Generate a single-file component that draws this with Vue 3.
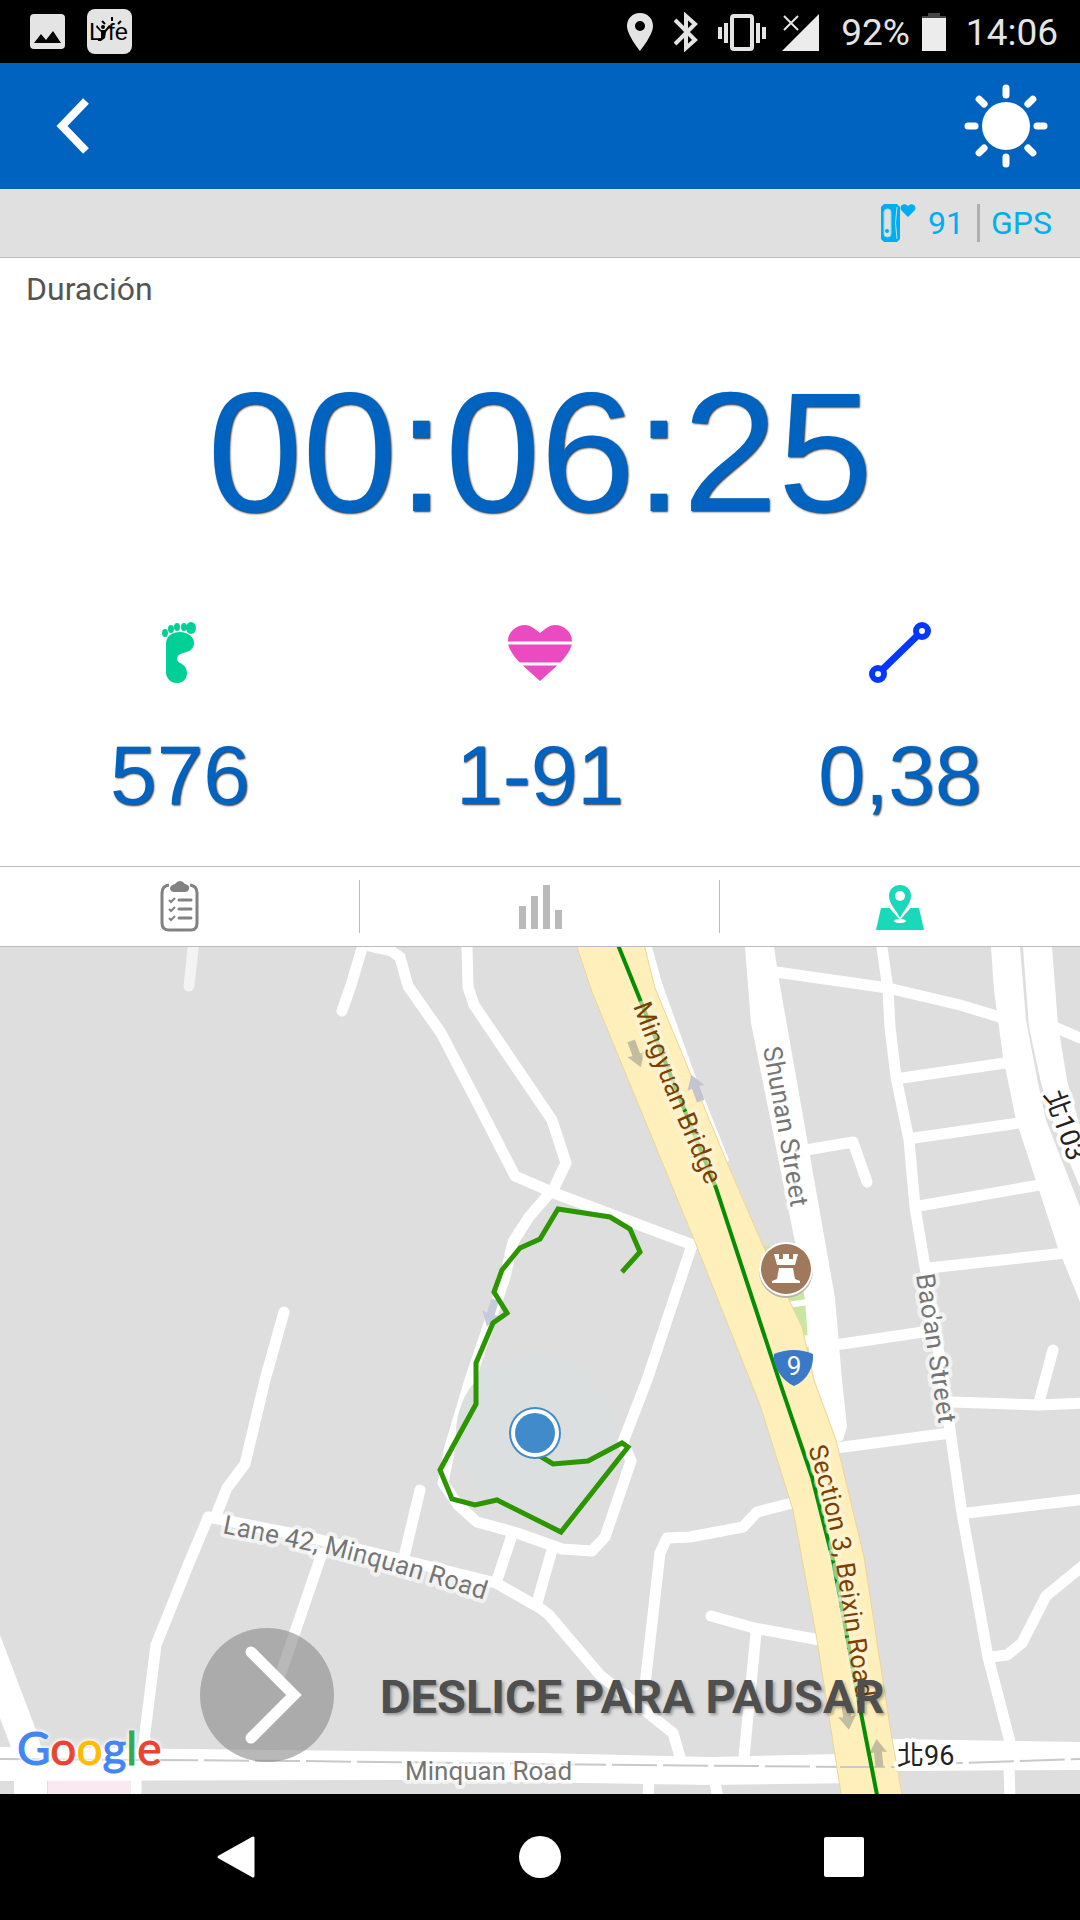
<script setup>
import { ref } from 'vue'

const tab = ref('map')
const duration = ref('00:06:25')
const steps = ref('576')
const heart = ref('1-91')
const distance = ref('0,38')

// streets of normal width, drawn as white polylines
const roads = [
  '363,945 351,985 342,1011',
  '365,945 391,951 400,957 408,986 441,1033 477,1102 515,1176 554,1193 693,1245',
  '467,945 468,987 474,1005 552,1120 566,1163 554,1188 529,1217 513,1242 505,1277 470,1380 450,1447 443,1483 458,1505 477,1522 517,1533 562,1549 592,1551 605,1537 631,1461 623,1442 647,1380 692,1245',
  '284,1312 265,1380 245,1464 227,1488 215,1518',
  '208,1518 189,1563 156,1645 145,1733 143,1755',
  '208,1517 300,1535 403,1560 496,1583 540,1608 549,1615 600,1675 673,1733 680,1757',
  '420,1490 404,1557',
  '511,1538 496,1583',
  '552,1550 537,1603',
  '711,1616 754,1628 820,1640',
  '756,1633 744,1757',
  '800,1501 757,1512 743,1527 690,1537 667,1538 660,1553 645,1685',
  '776,972 888,988 960,1005 1000,1017',
  '1050,1025 1080,1038',
  '882,947 888,990 890,1027 896,1077 909,1140 915,1207 925,1267 936,1333 950,1430 962,1513 988,1657 1010,1742',
  '902,1078 1005,1063',
  '914,1138 1019,1123',
  '919,1206 1045,1184',
  '929,1268 1065,1253',
  '800,1151 853,1142 867,1182',
  '835,1345 930,1331',
  '836,1448 950,1433',
  '952,1402 1039,1405 1085,1403',
  '1039,1402 1053,1350',
  '967,1513 1085,1499',
  '991,1657 1007,1655 1022,1643 1046,1596 1085,1564',
  '136,1770 136,1800',
  '649,1775 648,1800',
  '714,1775 718,1800',
  '1009,1765 1010,1800',
]

// wide streets, drawn as filled areas
const avenues = [
  '745,947 751,1023 795,1242 805,1300 809,1353 814,1380 836,1443 843,1440 847,1427 842,1380 835,1298 779,980 774,947',
  '991,947 994,990 1003,1057 1016,1120 1058,1248 1080,1302 1080,1207 1046,1120 1038,1083 1026,1020 1020,947',
  '1023,947 1029,1027 1041,1083 1057,1133 1080,1187 1080,1127 1067,1080 1058,1025 1052,947',
  '0,1635 36,1730 42,1750 12,1750 0,1718',
  '0,1747 540,1753 710,1757 840,1754 890,1739 1080,1742 1080,1770 900,1771 860,1783 710,1785 400,1780 0,1781',
  '14,1779 47,1779 47,1794 14,1794',
]

const arrows = [
  { x: 636, y: 1054, turn: 160, color: '#c4bc9f' },
  { x: 696, y: 1088, turn: -20, color: '#c3c4cd' },
  { x: 491, y: 1313, turn: 197, color: '#c6cadb' },
  { x: 847, y: 1716, turn: 172, color: '#c4bc9f' },
  { x: 878, y: 1753, turn: -6, color: '#c4bc9f' },
]

const track = '622,1272 640,1252 630,1229 610,1217 558,1209 540,1239 520,1248 502,1270 494,1292 507,1313 493,1323 476,1363 476,1404 440,1470 452,1499 475,1505 497,1500 561,1532 628,1447 622,1443 588,1461 553,1464 540,1456'
</script>

<template>
  <div class="app">
    <div class="status">
      <div class="status-side">
        <svg class="i-photo" viewBox="0 0 36 36">
          <rect width="35" height="35" rx="4" fill="#e4e4e4" />
          <path d="M4 29 L11 20 L16 26 L23 17 L31 29 Z" fill="#000" />
        </svg>
        <svg class="i-life" viewBox="0 0 45 45">
          <rect width="45" height="45" rx="8" fill="#e4e4e4" />
          <text x="2" y="31" class="life">L</text>
          <text x="21" y="31" class="life">fe</text>
          <circle cx="16" cy="18" r="2" />
          <path d="M10 16 L14 21 H18 L22 16 L24 17 L19 23 L18 29 L14 32 H11 V30 L14 29 V23 L9 18 Z" />
          <path d="M15 12 L18 15 M25 8 V12 M34 12 L31 15" stroke="#000" stroke-width="2" />
        </svg>
      </div>
      <div class="status-side right">
        <svg width="28" height="40" viewBox="0 0 28 40">
          <path d="M14 1 C6 1 1 7 1 14 C1 23 14 39 14 39 C14 39 27 23 27 14 C27 7 22 1 14 1 Z M14 9 A5 5 0 1 1 14 19 A5 5 0 1 1 14 9 Z" fill="#e4e4e4" fill-rule="evenodd" />
        </svg>
        <svg width="24" height="40" viewBox="0 0 24 40">
          <path d="M1 8 L21 28 L12 36 V4 L21 12 L1 32" fill="none" stroke="#e4e4e4" stroke-width="4" />
        </svg>
        <svg class="i-vib" width="48" height="40" viewBox="0 0 48 40">
          <rect x="14" y="4" width="20" height="33" rx="2" fill="none" stroke="#e4e4e4" stroke-width="4" />
          <path d="M8 11 V31 M40 11 V31 M2 15 V27 M46 15 V27" stroke="#e4e4e4" stroke-width="4" />
        </svg>
        <svg width="38" height="40" viewBox="0 0 38 40">
          <path d="M38 2 V39 H1 Z" fill="#ececec" />
          <path d="M3 4 L17 18 M17 4 L3 18" stroke="#e4e4e4" stroke-width="2" />
        </svg>
        <span class="battery">92%</span>
        <svg width="24" height="40" viewBox="0 0 24 40">
          <path d="M6 1 H18 V4 H24 V7 H0 V4 H6 Z" fill="#444" />
          <path d="M0 6 H24 V39 H0 Z" fill="#ececec" />
        </svg>
        <span class="clock">14:06</span>
      </div>
    </div>

    <header class="header">
      <button class="icon-btn" aria-label="Atrás">
        <svg width="34" height="56" viewBox="0 0 34 56">
          <path d="M30 3 L6 28 L30 53" fill="none" stroke="#fff" stroke-width="8" />
        </svg>
      </button>
      <button class="icon-btn" aria-label="Brillo">
        <svg width="84" height="84" viewBox="-42 -42 84 84">
          <circle r="24" fill="#fff" />
          <path v-for="n in 8" :key="n" d="M0 -31 V-38" :transform="`rotate(${n * 45})`" stroke="#fff" stroke-width="7" stroke-linecap="round" />
        </svg>
      </button>
    </header>

    <div class="signals">
      <svg width="36" height="38" viewBox="0 0 36 38">
        <path d="M3 0 H16 L19 3 V35 L16 38 H3 L0 35 V3 Z" fill="#00aeef" />
        <rect x="3" y="5" width="7" height="28" rx="3" fill="#e0e0e0" stroke="#8fd4ef" stroke-width="1" />
        <circle cx="6" cy="27" r="2" fill="#00aeef" />
        <path d="M16 3 Q13 19 16 35" fill="none" stroke="#b4dceb" stroke-width="1" />
        <path d="M27 13 L20 6 C18 2 23 -2 27 2 C31 -2 36 2 34 6 Z" fill="#00aeef" />
      </svg>
      <span class="bpm">91</span>
      <span class="gps">GPS</span>
    </div>

    <section class="summary">
      <h2 class="label">Duración</h2>
      <div class="timer">{{ duration }}</div>
      <div class="metrics">
        <div class="metric">
          <svg width="64" height="64" viewBox="0 0 64 64">
            <g fill="#00cf96">
              <ellipse cx="17" cy="13" rx="3" ry="4" />
              <ellipse cx="23" cy="9" rx="3" ry="4" />
              <ellipse cx="29" cy="7" rx="3" ry="4" />
              <ellipse cx="36" cy="7" rx="3" ry="4" />
              <ellipse cx="43" cy="8" rx="5" ry="6" />
              <path d="M18 24 C18 16 24 12 32 12 C40 12 46 17 46 23 C46 29 41 32 35 33 C31 34 29 36 29 39 C29 44 39 43 39 53 C39 59 35 63 29 63 C22 63 18 58 18 52 Z" />
            </g>
          </svg>
          <span class="value">{{ steps }}</span>
        </div>
        <div class="metric">
          <svg width="64" height="64" viewBox="0 0 64 64">
            <path d="M32 61 L12 43 C4 34 0 28 0 21 C0 12 8 5 17 5 C22 5 26 8 32 13 C38 8 42 5 47 5 C56 5 64 12 64 21 C64 28 60 34 52 43 Z" fill="#eb4bc0" />
            <path d="M0 23 H64 M0 44 H64" stroke="#fff" stroke-width="3" />
          </svg>
          <span class="value">{{ heart }}</span>
        </div>
        <div class="metric">
          <svg width="64" height="64" viewBox="0 0 64 64">
            <g fill="none" stroke="#0437ff" stroke-width="6">
              <circle cx="10" cy="54" r="6" />
              <circle cx="54" cy="11" r="6" />
              <path d="M14 50 L50 15" stroke-width="7" />
            </g>
          </svg>
          <span class="value">{{ distance }}</span>
        </div>
      </div>
    </section>

    <nav class="tabs">
      <button class="tab" aria-label="Lista" :aria-pressed="tab === 'list'" @click="tab = 'list'">
        <svg width="40" height="52" viewBox="0 0 40 52">
          <path d="M9 4 Q2 5 2 12 V42 Q2 49 9 49 H31 Q37 49 37 42 V12 Q37 5 30 4" fill="none" stroke="#828282" stroke-width="3" />
          <path d="M10 8 Q10 4 15 3 Q17 0 20 0 Q23 0 25 3 Q30 4 29 8 Q28 11 25 11 H14 Q11 11 10 8 Z" fill="#828282" />
          <path d="M19 19 H31 M19 28 H31 M19 37 H31" stroke="#828282" stroke-width="3" stroke-linecap="round" />
          <path d="M9 19 L11 21 L15 17 M9 28 L11 30 L15 26 M9 37 L11 39 L15 35" fill="none" stroke="#828282" stroke-width="2" />
        </svg>
      </button>
      <button class="tab" aria-label="Gráfico" :aria-pressed="tab === 'chart'" @click="tab = 'chart'">
        <svg width="44" height="46" viewBox="0 0 44 46">
          <path d="M1 22 H8 V45 H1 Z M13 12 H20 V45 H13 Z M25 1 H32 V45 H25 Z M37 26 H44 V45 H37 Z" fill="#bababa" />
        </svg>
      </button>
      <button class="tab" aria-label="Mapa" :aria-pressed="tab === 'map'" @click="tab = 'map'">
        <svg width="48" height="46" viewBox="0 0 48 46">
          <path d="M5 24 H43 L48 46 H0 Z" fill="#19d9ba" />
          <path d="M24 36 L10 20 H38 Z" fill="#fff" />
          <path d="M24 34 C21 27 13 20 13 12 C13 5 18 1 24 1 C30 1 35 5 35 12 C35 20 27 27 24 34 Z" fill="#19d9ba" />
          <circle cx="24" cy="12" r="5" fill="#fff" />
          <ellipse cx="24" cy="37" rx="6" ry="2" fill="#fff" />
        </svg>
      </button>
    </nav>

    <main class="map">
      <svg class="canvas" viewBox="0 947 1080 847" preserveAspectRatio="xMidYMid slice">
        <defs>
          <path id="p-bridge" d="M633 1006 L668 1098 L708 1190 L730 1240" />
          <path id="p-shunan" d="M763 1048 L779 1136 L793 1220 L799 1260" />
          <path id="p-baoan" d="M916 1275 L929 1360 L941 1440 L945 1470" />
          <path id="p-section" d="M808 1448 Q828 1510 837 1570 L858 1710 L862 1740" />
          <path id="p-lane" d="M222 1533 L330 1555 Q410 1575 500 1605 L520 1612" />
          <path id="arrow" d="M0 -14 L9 0 L4 -1 V14 H-4 V-1 L-9 0 Z" />
        </defs>

        <rect y="947" width="1080" height="847" fill="#dedede" />
        <path d="M48 1780 H130 V1794 H48 Z" fill="#f8eaf0" />
        <path d="M762 1246 H800 L813 1380 H795 Z" fill="#cae6a3" />
        <polyline points="194,940 189,986" class="road faint" />
        <polyline v-for="r in roads" :key="r" :points="r" class="road" />
        <polyline points="322,1553 281,1673" class="road" />
        <polygon v-for="a in avenues" :key="a" :points="a" fill="#fff" />
        <path d="M788 1305 L808 1302" stroke="#fff" stroke-width="6" />
        <circle cx="807" cy="1341" r="6" fill="#fff" />
        <path d="M0 1759 L300 1761 L540 1764 L850 1767 H898 L960 1763 L1080 1759" class="center-line" />
        <polygon points="643,947 652,947 662,983 695,1075 729,1160 726,1165 655,988" fill="#fff" />
        <polygon points="577,947 592,992 693,1237 750,1380 760,1405 793,1510 817,1640 842,1800 903,1800 891,1733 864,1557 836,1440 814,1380 802,1327 764,1248 726,1160 655,988 643,940 577,940" class="highway" />
        <path d="M840 1767 H898" class="center-line" />
        <use v-for="a in arrows" :key="a.x" href="#arrow" :transform="`translate(${a.x} ${a.y}) rotate(${a.turn})`" :fill="a.color" />

        <polyline points="616,940 716,1188 779,1380 812,1477 833,1560 860,1708 878,1800" class="route" />

        <g class="names main-road">
          <text><textPath href="#p-bridge">Mingyuan Bridge</textPath></text>
          <text><textPath href="#p-section">Section 3, Beixin Road</textPath></text>
        </g>
        <g class="names">
          <text><textPath href="#p-shunan">Shunan Street</textPath></text>
          <text><textPath href="#p-baoan">Bao'an Street</textPath></text>
          <text><textPath href="#p-lane">Lane 42, Minquan Road</textPath></text>
          <text x="405" y="1780">Minquan Road</text>
        </g>
        <g class="names dark">
          <text x="897" y="1765">北96</text>
          <text transform="translate(1044 1094) rotate(70)">北103</text>
        </g>

        <circle cx="535" cy="1433" r="79" fill="#dcdfdf" />
        <polyline :points="track" class="track" />
        <circle cx="535" cy="1433" r="26" fill="#428bca" />
        <circle cx="535" cy="1433" r="24" fill="#fff" />
        <circle cx="535" cy="1433" r="20" fill="#428bca" />

        <!-- castle pin -->
        <circle cx="786" cy="1271" r="27" fill="#b9b3ac" />
        <circle cx="786" cy="1269" r="27" fill="#fff" />
        <circle cx="786" cy="1269" r="25" fill="#a0785c" />
        <path d="M774 1254 H779 V1259 H783 V1254 H789 V1259 H793 V1254 H798 L795 1265 H777 Z M779 1268 H793 L795 1279 L800 1281 V1283 H772 V1281 L777 1279 Z" fill="#fff" />

        <!-- highway shield -->
        <path d="M774 1354 Q794 1346 813 1354 C814 1366 808 1380 794 1386 C781 1380 773 1366 774 1354 Z" fill="#3a78c8" />
        <text x="794" y="1375" class="shield">9</text>
      </svg>

      <div class="slider">
        <button class="knob" aria-label="Deslice para pausar">
          <svg width="134" height="134" viewBox="0 0 134 134">
            <path d="M51 24 L94 67 L51 110" fill="none" stroke="#fff" stroke-width="11" stroke-linecap="round" />
          </svg>
        </button>
        <span class="slider-text">DESLICE PARA PAUSAR</span>
      </div>

      <a class="google" href="#" aria-label="Google"><span class="b">G</span><span class="r">o</span><span class="y">o</span><span class="b">g</span><span class="g">l</span><span class="r">e</span></a>
    </main>

    <footer class="keys">
      <button class="key" aria-label="Atrás">
        <svg width="44" height="44" viewBox="0 0 44 44">
          <path d="M39 3 V41 L5 22 Z" fill="#fff" stroke="#fff" stroke-width="3" stroke-linejoin="round" />
        </svg>
      </button>
      <button class="key" aria-label="Inicio">
        <svg width="44" height="44" viewBox="0 0 44 44"><circle cx="22" cy="22" r="21" fill="#fff" /></svg>
      </button>
      <button class="key" aria-label="Recientes">
        <svg width="44" height="44" viewBox="0 0 44 44"><rect x="2" y="2" width="40" height="40" rx="2" fill="#fff" /></svg>
      </button>
    </footer>
  </div>
</template>

<style>
body {
  margin: 0;
  background: #000;
}
</style>

<style scoped>
.app {
  min-height: 100vh;
  display: flex;
  flex-direction: column;
  background: #fff;
  font-family: Roboto, "Noto Sans CJK TC", sans-serif;
}

svg { display: block; }

button {
  padding: 0;
  border: none;
  background: none;
  cursor: pointer;
}

.status {
  display: flex;
  justify-content: space-between;
  height: 63px;
  padding: 0 22px 0 30px;
  background: #000;
  color: #e4e4e4;
  font-size: 37px;
}

.status-side {
  display: flex;
  align-items: center;
  gap: 21px;
}

.status-side.right { gap: 20px; }

.i-photo { width: 36px; height: 36px; }
.i-life { width: 45px; height: 45px; }
.life { font: 24px "Liberation Sans", sans-serif; }
.i-vib { margin-right: -5px; }
.battery { margin: 2px -8px 0 2px; }
.clock { margin-top: 2px; }

.header {
  display: flex;
  align-items: center;
  justify-content: space-between;
  height: 126px;
  padding: 0 32px 0 56px;
  background: #0063bf;
}

.signals {
  display: flex;
  align-items: center;
  justify-content: flex-end;
  height: 68px;
  padding-right: 28px;
  background: #e0e0e0;
  border-bottom: 1px solid #bcbcbc;
  color: #00aeef;
  font-size: 32px;
}

.bpm { margin: 0 13px 0 11px; }

.gps {
  padding-left: 11px;
  border-left: 3px solid #b0b0b0;
  line-height: 38px;
}

.summary { padding: 12px 0 43px; }

.label {
  margin: 0 26px;
  font-size: 32px;
  font-weight: 400;
  line-height: 38px;
  color: #555;
}

.timer,
.value {
  font-family: "Liberation Sans", Arial, sans-serif;
  color: #0063bf;
  text-shadow: 1px 1px 2px #333;
}

.timer {
  margin-top: 58px;
  font-size: 171px;
  line-height: 172px;
  text-align: center;
}

.metrics {
  display: grid;
  grid-template-columns: repeat(3, 1fr);
  margin-top: 82px;
}

.metric {
  display: flex;
  flex-direction: column;
  align-items: center;
  gap: 43px;
}

.value {
  font-size: 84px;
  line-height: 96px;
}

.tabs {
  display: grid;
  grid-template-columns: repeat(3, 1fr);
  height: 79px;
  align-items: center;
  border-top: 1px solid #bcbcbc;
  border-bottom: 1px solid #bcbcbc;
}

.tab {
  height: 53px;
  display: grid;
  place-items: center;
  border-right: 1px solid #bcbcbc;
}

.tab:last-child { border-right-color: transparent; }

.map {
  position: relative;
  flex: 1;
  display: grid;
  overflow: hidden;
}

.canvas {
  width: 100%;
  height: 100%;
}

.road {
  fill: none;
  stroke: #fff;
  stroke-width: 11;
  stroke-linecap: round;
  stroke-linejoin: round;
}

.road.faint { stroke: #f3f3f3; }

.center-line {
  fill: none;
  stroke: #c9c9c9;
  stroke-width: 2;
  stroke-dasharray: 45 6;
}

.highway {
  fill: #ffefbb;
  stroke: #ecd596;
  stroke-width: 1;
}

.route {
  fill: none;
  stroke: #078c06;
  stroke-width: 4;
}

.track {
  fill: none;
  stroke: #2b9600;
  stroke-width: 5;
}

.names {
  font-size: 26px;
  fill: #757575;
  stroke: rgba(255, 255, 255, 0.6);
  stroke-width: 8px;
  stroke-linejoin: round;
  paint-order: stroke;
}

.names.main-road {
  fill: #7b3f00;
  stroke: rgba(255, 246, 220, 0.6);
}

.names.dark {
  font-size: 27px;
  fill: #222;
  stroke: #fff;
}

.shield {
  font-size: 26px;
  fill: #fff;
  text-anchor: middle;
}

.slider {
  position: absolute;
  left: 200px;
  bottom: 32px;
  display: flex;
  align-items: center;
  gap: 46px;
}

.knob {
  border-radius: 50%;
  background: rgba(137, 137, 137, 0.6);
}

.slider-text {
  padding-top: 2px;
  font-size: 47px;
  font-weight: 700;
  color: #4f4f4f;
  text-shadow: 2px 2px 3px rgba(0, 0, 0, 0.3);
  white-space: nowrap;
}

.google {
  position: absolute;
  left: 17px;
  bottom: 18px;
  font-family: Lato, sans-serif;
  font-size: 46px;
  line-height: 56px;
  text-decoration: none;
  -webkit-text-stroke: 1px currentColor;
  text-shadow: 0 0 4px #fff, 0 0 4px #fff, 0 0 6px #fff;
}

.google .b { color: #4285f4; }
.google .r { color: #ea4335; }
.google .y { color: #fbbc05; }
.google .g { color: #34a853; }

.keys {
  display: flex;
  justify-content: center;
  align-items: center;
  gap: 260px;
  height: 126px;
  background: #000;
}
</style>
